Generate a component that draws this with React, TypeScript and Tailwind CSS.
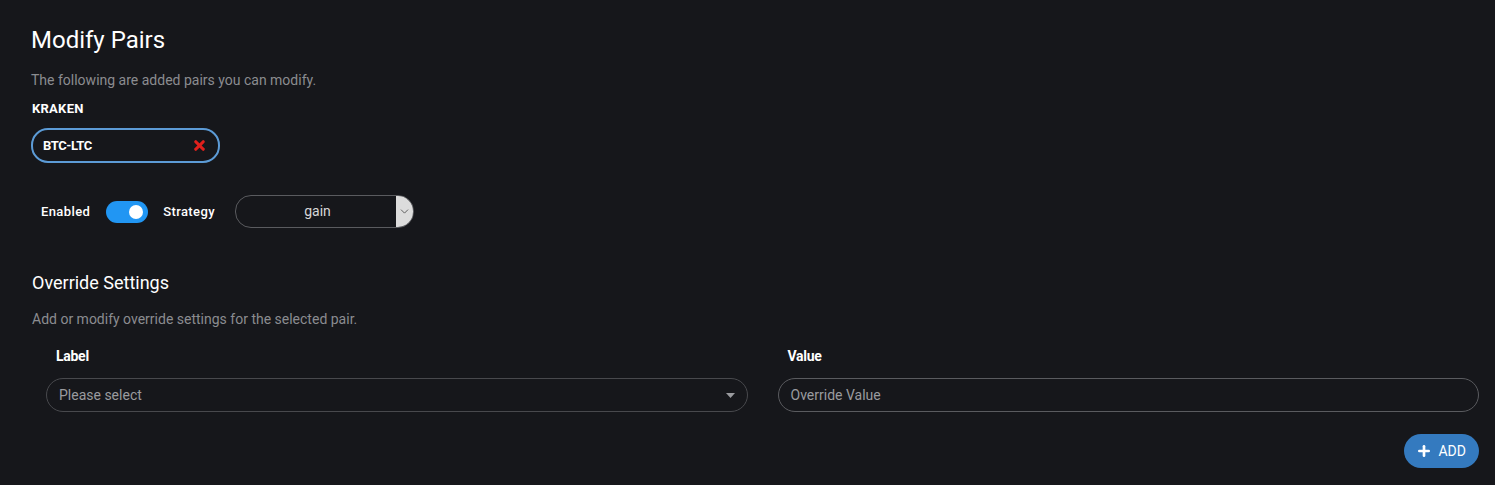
import { Plus, X, ChevronDown } from "lucide-react";

export default function App() {
  return (
    <div className="min-h-[485px] w-full bg-[#16171b] font-['Roboto',sans-serif] text-white">
      <div className="pl-[32px] pr-[16px] pt-[26px]">
        <h1 className="-ml-[1px] text-[24px] leading-[28px] font-normal">Modify Pairs</h1>
        <p className="mt-[18px] -ml-[1px] text-[14px] leading-[16px] text-[#8b8c90]">The following are added pairs you can modify.</p>
        <p className="mt-[13px] text-[13px] leading-[15px] font-bold tracking-[0.02em]">KRAKEN</p>

        <div className="mt-[12px] -ml-[1px] flex h-[35px] w-[189px] items-center justify-between rounded-[17px] border-2 border-[#5c9bd6] pl-[10px] pr-[11px]">
          <span className="text-[13px] font-bold tracking-[-0.03em]">BTC-LTC</span>
          <X size={15} strokeWidth={5} className="text-[#e0201c]" />
        </div>

        <div className="mt-[32px] flex items-center pl-[9px]">
          <span className="text-[13px] font-medium tracking-[0.03em]">Enabled</span>
          <div className="ml-[16px] flex h-[22px] w-[42px] items-center justify-end rounded-full bg-[#2196f3] pr-[5px]">
            <div className="h-[14px] w-[14px] rounded-full bg-white" />
          </div>
          <span className="ml-[15px] text-[13px] font-medium tracking-[0.03em]">Strategy</span>
          <div className="ml-[20px] flex h-[33px] w-[179px] overflow-hidden rounded-[16px] border border-[#5a5b5f]">
            <div className="flex flex-1 items-center justify-center pl-[3px] text-[14px] text-[#d6d6d8]">gain</div>
            <div className="flex w-[17px] items-center justify-center bg-[#dcdcdc] text-[#444]">
              <ChevronDown size={13} strokeWidth={1.5} />
            </div>
          </div>
        </div>

        <h2 className="mt-[44px] text-[18px] leading-[22px] font-normal">Override Settings</h2>
        <p className="mt-[17px] text-[14px] leading-[16px] text-[#8b8c90]">Add or modify override settings for the selected pair.</p>

        <div className="mt-[21px] grid grid-cols-2 gap-x-[30px] pl-[14px]">
          <div>
            <p className="pl-[10px] text-[14px] leading-[16px] font-bold tracking-[-0.02em]">Label</p>
            <div className="mt-[14px] flex h-[34px] items-center justify-between rounded-full border border-[#48494d] pl-[12px] pr-[12px]">
              <span className="text-[14px] text-[#9a9b9f]">Please select</span>
              <svg width="9" height="5" viewBox="0 0 9 5"><path d="M0 0h9L4.5 5z" fill="#9a9b9f" /></svg>
            </div>
          </div>
          <div>
            <p className="pl-[10px] text-[14px] leading-[16px] font-bold tracking-[-0.02em]">Value</p>
            <div className="mt-[14px] flex h-[34px] items-center rounded-full border border-[#5a5b5f] pl-[12px]">
              <span className="text-[14px] text-[#9a9b9f]">Override Value</span>
            </div>
          </div>
        </div>

        <div className="mt-[22px] flex justify-end">
          <button className="flex h-[34px] items-center gap-[6px] rounded-full bg-[#347abf] pl-[12px] pr-[13px] text-[14px] text-white">
            <Plus size={16} strokeWidth={4} />
            <span>ADD</span>
          </button>
        </div>
      </div>
    </div>
  );
}
